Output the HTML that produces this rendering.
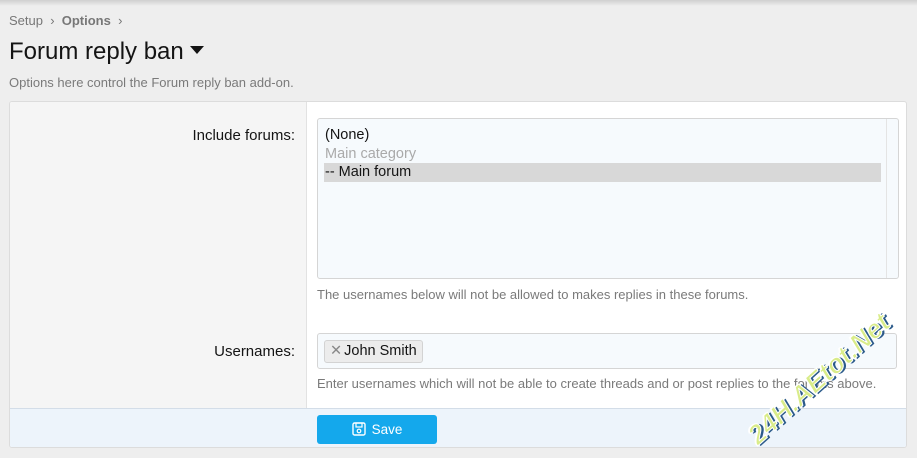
<!DOCTYPE html>
<html><head><style>
*{box-sizing:border-box;margin:0;padding:0}
body{width:917px;height:458px;overflow:hidden;background:#eeeeee;font-family:"Liberation Sans",Arial,sans-serif;position:relative}
.topsh{position:absolute;left:0;top:0;width:917px;height:6px;background:linear-gradient(#cfcfcf,#eeeeee)}
.crumb{position:absolute;left:9px;top:13px;font-size:13px;color:#777}
.crumb b{color:#777}
h1{position:absolute;left:9px;top:38px;font-size:24px;font-weight:normal;color:#141414}
.tri{display:inline-block;width:0;height:0;border-left:7px solid transparent;border-right:7px solid transparent;border-top:8px solid #141414;vertical-align:middle;margin-left:6px;position:relative;top:-3px}
.desc{position:absolute;left:9px;top:75px;font-size:13px;color:#7a7a7a}
.panel{position:absolute;left:9px;top:101px;width:898px;height:347px;background:#fff;border:1px solid #dcdcdc;border-radius:3px;overflow:hidden}
.left{position:absolute;left:0;top:0;width:297px;height:306px;background:#f5f5f5;border-right:1px solid #e2e2e2}
.lbl{position:absolute;right:611px;font-size:15px;color:#141414}
.sel{position:absolute;left:307px;top:16px;width:582px;height:161px;background:#f6fafd;border:1px solid #d5d5d5;border-radius:3px}
.sb{position:absolute;right:11px;top:0;bottom:0;border-left:1px solid #e4e4e4}
.opt{position:absolute;left:7px;font-size:14.5px;color:#141414}
.hl{position:absolute;left:6px;top:44px;width:557px;height:19px;background:#d8d8d8}
.hint{position:absolute;left:307px;font-size:13px;color:#7a7a7a;white-space:nowrap}
.tok{position:absolute;left:307px;top:231px;width:580px;height:36px;background:#f6fafd;border:1px solid #d5d5d5;border-radius:3px}
.tag{position:absolute;left:6px;top:6px;height:23px;padding:0 5px;border:1px solid #d3d3d3;background:#ececec;border-radius:3px;font-size:14.5px;line-height:21px;color:#141414}
.tag span{color:#888;margin-right:2px}
.foot{position:absolute;left:0;top:306px;width:898px;height:41px;background:#edf4fb;border-top:1px solid #d3dde8}
.btn{position:absolute;left:307px;top:6px;width:120px;height:29px;background:#14a8ec;border-radius:3px;color:#fff;font-size:13.5px;line-height:29px;text-align:center}
.wm{position:absolute;left:752px;top:424px;line-height:30px;transform:rotate(-42deg);transform-origin:0 50%;font-size:27px;font-weight:bold;font-style:italic;color:#d9ec8a;-webkit-text-stroke:1px #fff;white-space:nowrap;text-shadow:2px 2px 0 #2b5a8a,-1px -1px 0 #fff}
</style></head><body>
<div class="topsh"></div>
<div class="crumb">Setup &nbsp;›&nbsp; <b>Options</b> &nbsp;›</div>
<h1>Forum reply ban<span class="tri"></span></h1>
<div class="desc">Options here control the Forum reply ban add-on.</div>
<div class="panel">
 <div class="left"></div>
 <div class="lbl" style="top:25px">Include forums:</div>
 <div class="sel"><div class="sb"></div>
  <div class="hl"></div>
  <div class="opt" style="top:8px">(None)</div>
  <div class="opt" style="top:27px;color:#aaa">Main category</div>
  <div class="opt" style="top:45px">-- Main forum</div>
 </div>
 <div class="hint" style="top:185px">The usernames below will not be allowed to makes replies in these forums.</div>
 <div class="lbl" style="top:241px">Usernames:</div>
 <div class="tok"><div class="tag"><span>✕</span>John Smith</div></div>
 <div class="hint" style="top:274px">Enter usernames which will not be able to create threads and or post replies to the forums above.</div>
 <div class="foot"><div class="btn"><svg width="14" height="14" viewBox="0 0 14 14" style="vertical-align:-2px;margin-right:6px"><rect x="1" y="1" width="12" height="12" rx="1.5" fill="none" stroke="#fff" stroke-width="1.4"/><rect x="4" y="1" width="6" height="4" fill="none" stroke="#fff" stroke-width="1.2"/><circle cx="7" cy="9" r="1.8" fill="none" stroke="#fff" stroke-width="1.2"/></svg>Save</div></div>
</div>
<div class="wm">24H.AEtot.Net</div>
</body></html>
